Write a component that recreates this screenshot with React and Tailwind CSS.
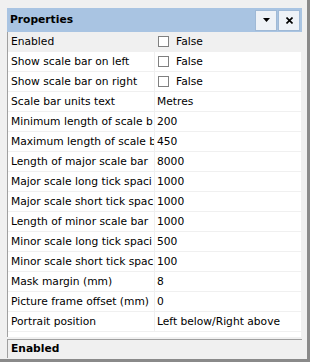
import React from 'react';

// textele sunt exact cat se vede in coloana (restul e taiat in original)
const rows = [
  ['Enabled', 'check'],
  ['Show scale bar on left', 'check'],
  ['Show scale bar on right', 'check'],
  ['Scale bar units text', 'Metres'],
  ['Minimum length of scale b', '200'],
  ['Maximum length of scale b', '450'],
  ['Length of major scale bar', '8000'],
  ['Major scale long tick spaci', '1000'],
  ['Major scale short tick spac', '1000'],
  ['Length of minor scale bar', '1000'],
  ['Minor scale long tick spaci', '500'],
  ['Minor scale short tick spac', '100'],
  ['Mask margin (mm)', '8'],
  ['Picture frame offset (mm)', '0'],
  ['Portrait position', 'Left below/Right above'],
];

function Row({ label, value, selected }) {
  return (
    <div className={`flex h-[20px] border-b border-[#f0f0f0] ${selected ? 'bg-[#f0f0f0]' : 'bg-white'}`}>
      <div className="w-[147px] pl-[3px] overflow-hidden whitespace-nowrap leading-[19px] border-r border-[#f0f0f0]">
        {label}
      </div>
      <div className="flex-1 pl-[2px] overflow-hidden whitespace-nowrap leading-[19px] flex items-center">
        {value === 'check' ? (
          <>
            <span className="ml-[1px] w-[11px] h-[11px] border border-[#808080] bg-white mr-[7px]" />
            <span>False</span>
          </>
        ) : value}
      </div>
    </div>
  );
}

export default function App() {
  return (
    <div
      className="w-[310px] h-[362px] bg-[#f0f0f0] text-black text-[10.7px] border-r-[3px] border-b-[3px] border-[#8a8a8a] overflow-hidden"
      style={{ fontFamily: '"DejaVu Sans", Verdana, sans-serif' }}
    >
      <div className="pl-[7px] pr-[5px] pt-[8px]">
        {/* bara de titlu */}
        <div className="h-[24px] bg-[#a9c4e2] flex items-center pl-[3px] pr-[2px]">
          <span className="font-bold">Properties</span>
          <div className="ml-auto flex gap-[1px]">
            <button className="w-[22px] h-[21px] bg-[#eef2f7] border border-[#9fb9d6] flex items-center justify-center">
              <svg width="7" height="4" viewBox="0 0 7 4"><path d="M0 0h7L3.5 4z" fill="#000" /></svg>
            </button>
            <button className="w-[22px] h-[21px] bg-[#eef2f7] border border-[#9fb9d6] flex items-center justify-center">
              <svg width="7" height="7" viewBox="0 0 7 7"><path d="M0.5 0.5l6 6M6.5 0.5l-6 6" stroke="#000" strokeWidth="1.6" /></svg>
            </button>
          </div>
        </div>

        {/* grila de proprietati */}
        <div className="w-[294px] h-[305px] border-l border-[#a0a0a0] bg-white">
          {rows.map((r, i) => (
            <Row key={r[0]} label={r[0]} value={r[1]} selected={i === 0} />
          ))}
        </div>

        {/* descrierea de jos */}
        <div className="mt-[2px] w-[295px] h-[19px] border-t border-l border-[#a0a0a0] bg-[#f0f0f0] pl-[3px] leading-[18px] font-bold">
          Enabled
        </div>
      </div>
    </div>
  );
}
